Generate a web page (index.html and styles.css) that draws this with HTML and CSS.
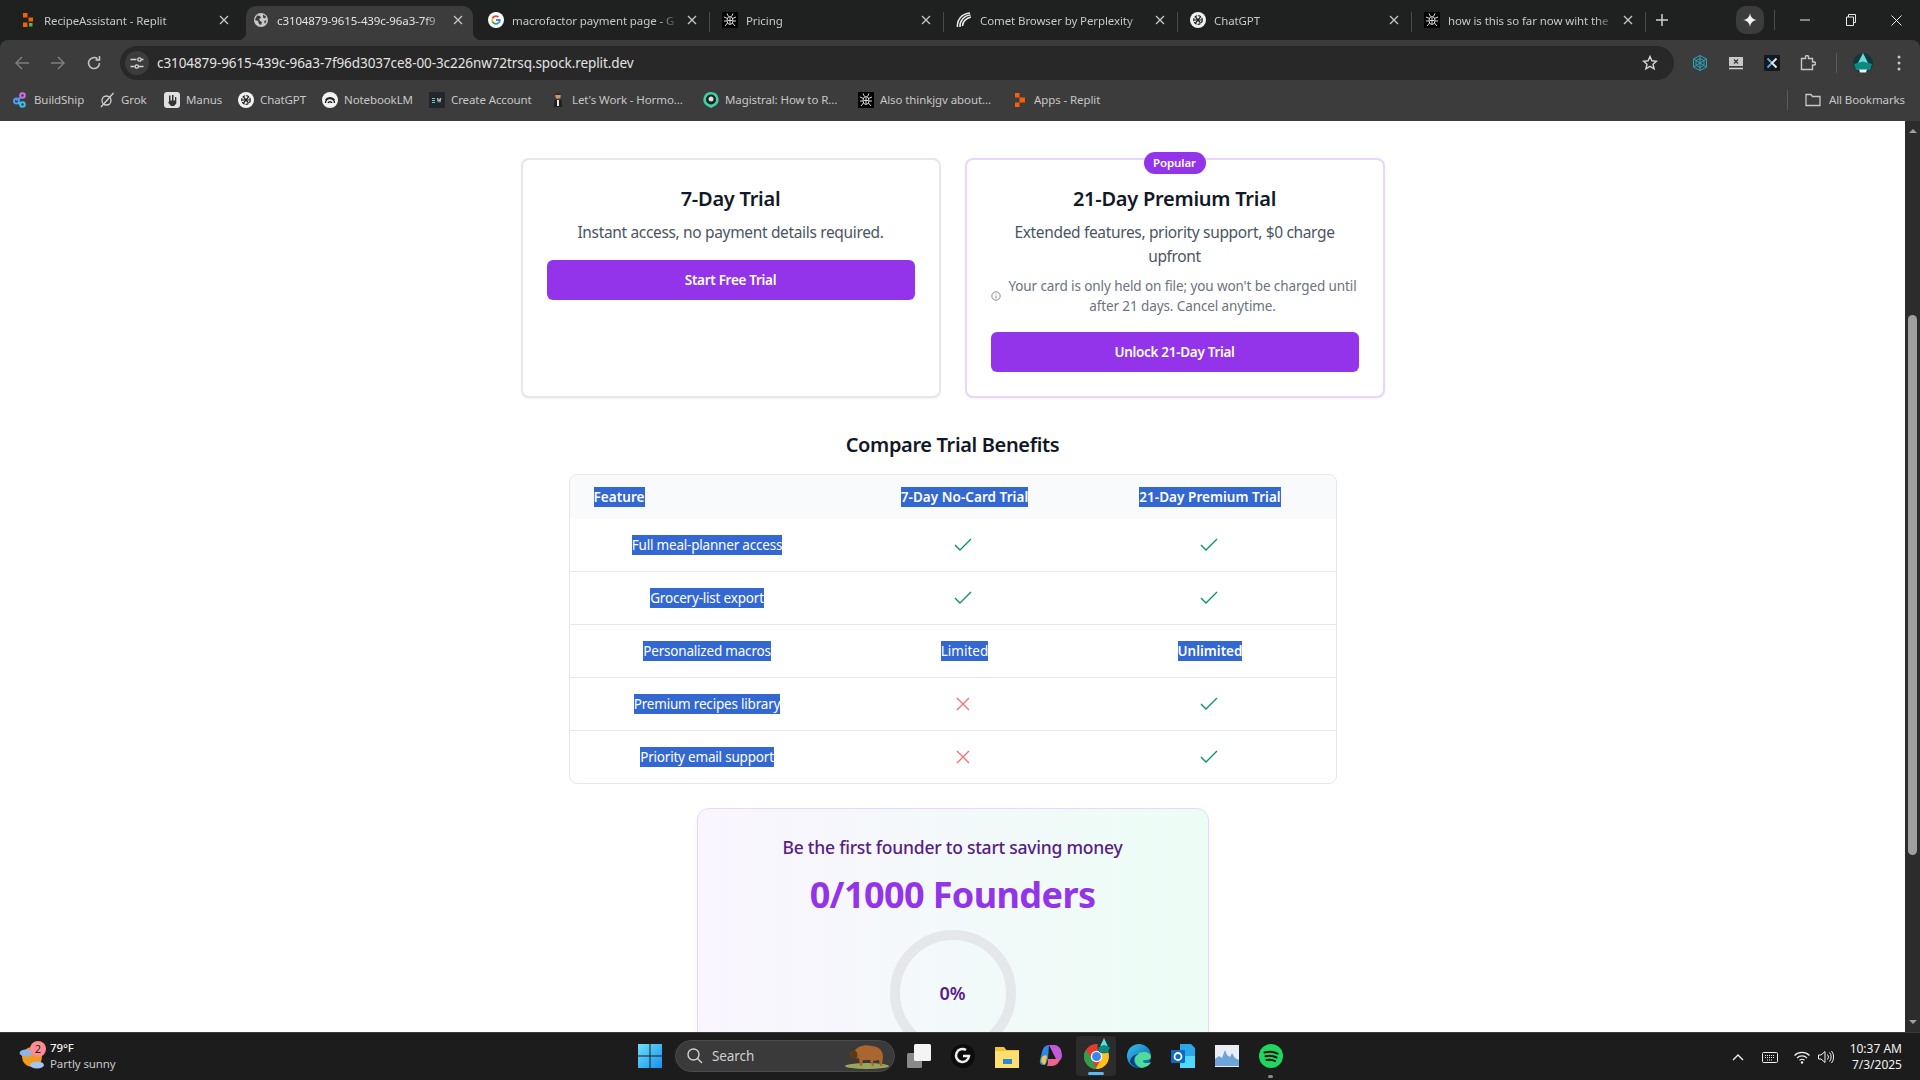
FILE: index.html
```html
<!DOCTYPE html>
<html lang="en">
<head>
<meta charset="utf-8">
<title>Trial</title>
<link rel="stylesheet" href="styles.css">
</head>
<body>
<svg class="defs" width="0" height="0" aria-hidden="true">
  <defs>
    <symbol id="replit" viewBox="0 0 16 16"><path fill="#f26207" d="M3 1h4.500v4.500H3zM7.500 5.500H13v5H7.500zM3 10.500h4.500V15H3z"/></symbol>
    <symbol id="replit-app" viewBox="0 0 16 16"><path fill="#f26207" d="M3 1h4.500v4.500H3zM8.500 5.500H13v4H8.500zM3 10.500h4.500V15H3z"/><path fill="#5fb04a" d="M9 11h3.500v3.500H9z"/></symbol>
    <symbol id="globe" viewBox="0 0 16 16"><circle cx="8" cy="8" r="7" fill="#c7c7c7"/><path fill="#3c3c3c" d="M4 3.500l3 .5 1 2-2 1 1 2 2 1-1 3-2-1-1-3-3-1zM10 2.500l3 2-1 2-2-1zM11 9l2.500-.5L12 12z"/></symbol>
    <symbol id="google" viewBox="0 0 16 16"><circle cx="8" cy="8" r="8" fill="#fff"/><path fill="#ea4335" d="M8 3.300c1.200 0 2.200.4 3 1.200L9.700 5.800C9.300 5.400 8.700 5.100 8 5.100c-1.300 0-2.400.9-2.800 2L3.700 6C4.500 4.400 6.100 3.300 8 3.300z"/><path fill="#fbbc05" d="M3.700 6l1.500 1.100a3 3 0 0 0 0 1.800L3.700 10a4.800 4.800 0 0 1 0-4z"/><path fill="#34a853" d="M3.700 10l1.500-1.100c.4 1.100 1.500 2 2.800 2 .7 0 1.300-.2 1.700-.5l1.400 1.100c-.8.800-1.900 1.200-3.100 1.200-1.900 0-3.500-1.100-4.300-2.700z"/><path fill="#4285f4" d="M12.700 8c0 1.400-.5 2.600-1.500 3.500L9.800 10.400c.5-.3.800-.8 1-1.400H8V7.100h4.600c.1.300.1.600.1.900z"/></symbol>
    <symbol id="spider" viewBox="0 0 16 16"><rect width="16" height="16" fill="#000"/><g fill="none" stroke="#d8d8d8" stroke-width="1"><ellipse cx="8" cy="8.500" rx="3" ry="4"/><path d="M5 1.500l1.500 3M11 1.500L9.500 4.500M2 5l3.500 1.500M14 5l-3.500 1.500M2 9h3M14 9h-3M3 14l2.500-3M13 14l-2.500-3M8 5v7M5.500 8.500h5"/></g></symbol>
    <symbol id="comet" viewBox="0 0 16 16"><g fill="none" stroke="#e8e8e8" stroke-width="1.500"><path d="M1.500 15C.5 8 6 1.500 14 1"/><path d="M4 15C3.500 9 8 3.500 14.500 3"/><path d="M6.500 14C6.500 10 10 6 15 5"/></g></symbol>
    <symbol id="gpt" viewBox="0 0 16 16"><circle cx="8" cy="8" r="8" fill="#f2f2f2"/><g fill="none" stroke="#222" stroke-width="1.200"><circle cx="8" cy="8" r="4.300" stroke-dasharray="3 1"/><path d="M5.500 5l5 6M10.500 5l-5 6M4 8h8"/></g></symbol>
    <symbol id="buildship" viewBox="0 0 16 16"><g fill="none" stroke-width="2"><circle cx="10.500" cy="3.500" r="2.300" stroke="#d070f0"/><path d="M9 5.500L4 8" stroke="#7a7cf0"/><circle cx="4.500" cy="9" r="2.500" stroke="#4a9cf0"/><path d="M6 11l3 1" stroke="#3ab8f0"/><circle cx="10.500" cy="12.500" r="2.300" stroke="#30c8e8"/></g></symbol>
    <symbol id="grok" viewBox="0 0 16 16"><g fill="none" stroke="#d0d0d0" stroke-width="1.300"><circle cx="7.500" cy="8.500" r="4.500"/><path d="M2 15L14.500 1"/></g></symbol>
    <symbol id="manus" viewBox="0 0 16 16"><rect width="16" height="16" rx="3" fill="#e0e0e0"/><path fill="#333" d="M5 3.500h1.500v5H8V3h1.500v5.500H11V5h1.300v6.500L10 14H7L4 10.500l1-.5z"/></symbol>
    <symbol id="notebook" viewBox="0 0 16 16"><circle cx="8" cy="8" r="8" fill="#f2f2f2"/><g fill="none" stroke="#222" stroke-width="1.400"><path d="M3.500 11a4.500 4.500 0 0 1 9 0"/><path d="M6 11a2.200 2.200 0 0 1 4 0"/><path d="M3.500 8a5 4 0 0 1 9 0"/></g></symbol>
    <symbol id="sw" viewBox="0 0 16 16"><rect width="16" height="16" fill="#23262c"/><path fill="#5fd3bd" d="M3 6h3v1H3zM3 8h3v1H3zM3 10h3v1H3z"/><path fill="#e0e0e0" d="M8 6l1 5 1-3 1 3 1.500-5h-1l-.5 2.500-1-2.500-1 2.500L8.900 6z"/></symbol>
    <symbol id="person" viewBox="0 0 16 16"><circle cx="8" cy="4" r="2.700" fill="#c89a74"/><path fill="#3a2c22" d="M5 3l1-2.500h4L11 3z"/><path fill="#1e1e1e" d="M4 15l.5-7h7l.5 7z"/><path fill="#e8e8e8" d="M7 8h2v6H7z"/></symbol>
    <symbol id="magistral" viewBox="0 0 16 16"><path fill="#3ecfa5" d="M8 0a7.500 7.500 0 0 1 3 14.400L8 16l-3-1.600A7.500 7.500 0 0 1 8 0z"/><circle cx="8" cy="7.500" r="5" fill="#15201d"/><circle cx="8" cy="7" r="2.500" fill="#e0e0e0"/></symbol>
    <symbol id="site" viewBox="0 0 16 16"><g fill="none" stroke="#d6d6d6" stroke-width="1.300"><path d="M1.500 4.500h6M1.500 11.500h4M12.500 4.500h2M9.500 11.500h5"/><circle cx="10.500" cy="4.500" r="1.700"/><circle cx="7.800" cy="11.500" r="1.700"/></g></symbol>
    <symbol id="close" viewBox="0 0 10 10"><path d="M1 1l8 8M9 1l-8 8" fill="none" stroke="#c7c7c7" stroke-width="1.300"/></symbol>
  </defs>
</svg>

<div class="app">
  <header class="tabstrip">
    <div class="tab"><svg class="fav"><use href="#replit-app"/></svg><span class="tab-title">RecipeAssistant - Replit</span><svg class="tab-x"><use href="#close"/></svg></div>
    <div class="tab active"><svg class="fav"><use href="#globe"/></svg><span class="tab-title">c3104879-9615-439c-96a3-7f9</span><svg class="tab-x"><use href="#close"/></svg></div>
    <div class="tab sep"><svg class="fav"><use href="#google"/></svg><span class="tab-title">macrofactor payment page - G</span><svg class="tab-x"><use href="#close"/></svg></div>
    <div class="tab sep"><svg class="fav"><use href="#spider"/></svg><span class="tab-title">Pricing</span><svg class="tab-x"><use href="#close"/></svg></div>
    <div class="tab sep"><svg class="fav"><use href="#comet"/></svg><span class="tab-title">Comet Browser by Perplexity</span><svg class="tab-x"><use href="#close"/></svg></div>
    <div class="tab sep"><svg class="fav"><use href="#gpt"/></svg><span class="tab-title">ChatGPT</span><svg class="tab-x"><use href="#close"/></svg></div>
    <div class="tab sep"><svg class="fav"><use href="#spider"/></svg><span class="tab-title">how is this so far now wiht the</span><svg class="tab-x"><use href="#close"/></svg></div>
    <svg class="newtab" viewBox="0 0 12 12"><path d="M6 0v12M0 6h12" stroke="#d0d0d0" stroke-width="1.500"/></svg>
    <div class="spark"><svg width="14" height="14" viewBox="0 0 14 14"><path fill="#f2f2f2" d="M7 0c.6 4 2.500 6.200 7 7-4.500.8-6.400 3-7 7-.6-4-2.500-6.200-7-7 4.500-.8 6.400-3 7-7z"/></svg></div>
    <div class="win-sep"></div>
    <div class="win-btns">
      <svg width="10" height="10" viewBox="0 0 10 10"><path d="M0 5h10" stroke="#e8e8e8"/></svg>
      <svg width="10" height="12" viewBox="0 0 10 12"><path d="M.5 3h7v8.500h-7zM2.500 3V.5h7v8H7.500" fill="none" stroke="#e8e8e8"/></svg>
      <svg width="11" height="11" viewBox="0 0 11 11"><path d="M.5.500l10 10M10.500.500l-10 10" stroke="#e8e8e8"/></svg>
    </div>
  </header>

  <div class="toolbar">
    <div class="nav">
      <svg viewBox="0 0 16 16"><path d="M15 8H2M8 2L2 8l6 6" fill="none" stroke="#7d7d7d" stroke-width="1.500"/></svg>
      <svg viewBox="0 0 16 16"><path d="M1 8h13M8 2l6 6-6 6" fill="none" stroke="#7d7d7d" stroke-width="1.500"/></svg>
      <svg viewBox="0 0 16 16"><path d="M13.500 8A5.500 5.500 0 1 1 11.500 3.800M13.500 1v4h-4" fill="none" stroke="#c7c7c7" stroke-width="1.500"/></svg>
    </div>
    <div class="omnibox">
      <div class="site-chip"><svg width="16" height="16"><use href="#site"/></svg></div>
      <span class="url">c3104879-9615-439c-96a3-7f96d3037ce8-00-3c226nw72trsq.spock.replit.dev</span>
      <svg class="star" viewBox="0 0 16 16"><path d="M8 1.500l1.900 4.300 4.600.4-3.500 3 1.100 4.600L8 11.300l-4.100 2.500L5 9.200l-3.500-3 4.600-.4z" fill="none" stroke="#d6d6d6" stroke-width="1.400"/></svg>
    </div>
    <div class="ext">
      <svg viewBox="0 0 16 16"><g fill="none" stroke="#2aa3bd" stroke-width="1"><path d="M8 .5L14.500 4v8L8 15.500 1.500 12V4z"/><path d="M8 3.500L12 5.700v4.600L8 12.500 4 10.300V5.700z"/><path d="M8 .5v15M1.500 4l13 8M14.500 4l-13 8"/></g></svg>
      <svg viewBox="0 0 16 16"><rect x="1" y="2" width="14" height="9" fill="#c7c7c7"/><path d="M6 4.500l4 4M10 4.500l-4 4" stroke="#333" stroke-width="1.200"/><path d="M1 13.500h14" stroke="#d6d6d6" stroke-width="1.500"/></svg>
      <svg viewBox="0 0 16 16"><rect width="16" height="16" rx="1" fill="#15181f"/><path d="M3.500 3.500L8 8l-4.500 4.500" fill="none" stroke="#5aa9f0" stroke-width="1.800"/><path d="M12.500 3.500L8 8l4.500 4.500" fill="none" stroke="#eee" stroke-width="1.800"/></svg>
      <svg viewBox="0 0 16 16"><path d="M1.500 3.500h4V2a1.500 1.500 0 0 1 3 0v1.500h4v3.500H14a1.500 1.500 0 0 1 0 3h-1.500v4.500h-11z" fill="none" stroke="#c7c7c7" stroke-width="1.400"/></svg>
      <div class="ext-sep"></div>
      <svg class="avatar" viewBox="0 0 20 20"><circle cx="10" cy="10" r="10" fill="#13373a"/><path fill="#67dcd8" d="M10 0l5.500 11L10 9l-5.500 2z"/><path fill="#0c8a82" d="M1 11l9-2.500 9 2.500-2 6H3z"/><path fill="#f2f2f2" d="M6 16.500h8l-1 3H7z"/></svg>
      <svg class="menu" viewBox="0 0 4 16"><circle cx="2" cy="2" r="1.500" fill="#c7c7c7"/><circle cx="2" cy="8" r="1.500" fill="#c7c7c7"/><circle cx="2" cy="14" r="1.500" fill="#c7c7c7"/></svg>
    </div>
  </div>

  <nav class="bookmarks">
    <a class="bm b1"><svg><use href="#buildship"/></svg>BuildShip</a>
    <a class="bm b2"><svg><use href="#grok"/></svg>Grok</a>
    <a class="bm b3"><svg><use href="#manus"/></svg>Manus</a>
    <a class="bm b4"><svg><use href="#gpt"/></svg>ChatGPT</a>
    <a class="bm b5"><svg><use href="#notebook"/></svg>NotebookLM</a>
    <a class="bm b6"><svg><use href="#sw"/></svg>Create Account</a>
    <a class="bm b7"><svg><use href="#person"/></svg>Let's Work - Hormo...</a>
    <a class="bm b8"><svg><use href="#magistral"/></svg>Magistral: How to R...</a>
    <a class="bm b9"><svg><use href="#spider"/></svg>Also thinkjgv about...</a>
    <a class="bm b10"><svg><use href="#replit"/></svg>Apps - Replit</a>
    <div class="bm-all">
      <div class="bm-sep"></div>
      <svg viewBox="0 0 16 14"><path d="M1 12.500V1.500h5l1.500 2h7.500v9z" fill="none" stroke="#c7c7c7" stroke-width="1.300"/></svg>
      <span>All Bookmarks</span>
    </div>
  </nav>

  <div class="viewport">
    <main class="page">
      <section class="cards">
        <article class="card">
          <h3 class="card-title">7-Day Trial</h3>
          <p class="card-desc">Instant access, no payment details required.</p>
          <button class="cta">Start Free Trial</button>
        </article>
        <article class="card premium">
          <span class="badge">Popular</span>
          <h3 class="card-title">21-Day Premium Trial</h3>
          <p class="card-desc">Extended features, priority support, $0 charge upfront</p>
          <div class="note">
            <svg viewBox="0 0 12 12"><circle cx="6" cy="6" r="5" fill="none" stroke="#6b7280"/><path d="M6 5.500V9M6 3v1.200" stroke="#6b7280"/></svg>
            <p>Your card is only held on file; you won't be charged until after 21 days. Cancel anytime.</p>
          </div>
          <button class="cta">Unlock 21-Day Trial</button>
        </article>
      </section>

      <h2 class="compare-title">Compare Trial Benefits</h2>
      <div class="table-wrap">
        <table class="compare">
          <colgroup><col class="c1"><col class="c2"><col class="c3"></colgroup>
          <thead>
            <tr><th class="left"><span class="sel">Feature</span></th><th><span class="sel">7-Day No-Card Trial</span></th><th><span class="sel">21-Day Premium Trial</span></th></tr>
          </thead>
          <tbody>
            <tr><td><span class="sel">Full meal-planner access</span></td><td><svg class="mark yes" viewBox="0 0 24 24"><path d="M20 6L9 17l-5-5"/></svg></td><td><svg class="mark yes" viewBox="0 0 24 24"><path d="M20 6L9 17l-5-5"/></svg></td></tr>
            <tr><td><span class="sel">Grocery-list export</span></td><td><svg class="mark yes" viewBox="0 0 24 24"><path d="M20 6L9 17l-5-5"/></svg></td><td><svg class="mark yes" viewBox="0 0 24 24"><path d="M20 6L9 17l-5-5"/></svg></td></tr>
            <tr><td><span class="sel">Personalized macros</span></td><td><span class="sel val">Limited</span></td><td><span class="sel val strong">Unlimited</span></td></tr>
            <tr><td><span class="sel">Premium recipes library</span></td><td><svg class="mark no" viewBox="0 0 24 24"><path d="M18 6L6 18M6 6l12 12"/></svg></td><td><svg class="mark yes" viewBox="0 0 24 24"><path d="M20 6L9 17l-5-5"/></svg></td></tr>
            <tr><td><span class="sel">Priority email support</span></td><td><svg class="mark no" viewBox="0 0 24 24"><path d="M18 6L6 18M6 6l12 12"/></svg></td><td><svg class="mark yes" viewBox="0 0 24 24"><path d="M20 6L9 17l-5-5"/></svg></td></tr>
          </tbody>
        </table>
      </div>

      <section class="founders">
        <p class="founders-lead">Be the first founder to start saving money</p>
        <p class="founders-count">0/1000 Founders</p>
        <div class="ring">0%</div>
      </section>
    </main>
    <aside class="scrollbar">
      <i class="arrow up"></i>
      <div class="track"><div class="thumb"></div></div>
      <i class="arrow down"></i>
    </aside>
  </div>

  <footer class="taskbar">
    <div class="weather">
      <div class="weather-icon">
        <svg width="26" height="28" viewBox="0 0 26 28"><circle cx="13" cy="15" r="10" fill="#f09a1e"/><ellipse cx="7" cy="11" rx="6.500" ry="3.500" fill="#8fb3e8"/><ellipse cx="18" cy="23" rx="7" ry="3.500" fill="#a7c4f0"/></svg>
        <span class="weather-badge">2</span>
      </div>
      <div class="weather-text"><span class="temp">79°F</span><span class="cond">Partly sunny</span></div>
    </div>
    <div class="task-center">
      <svg class="ti win" viewBox="0 0 24 24"><defs><linearGradient id="wg" x1="0" y1="0" x2="1" y2="1"><stop offset="0" stop-color="#6fe0f8"/><stop offset="1" stop-color="#1590f0"/></linearGradient></defs><path fill="url(#wg)" d="M0 0h11.500v11.500H0zM12.500 0H24v11.500H12.500zM0 12.500h11.500V24H0zM12.500 12.500H24V24H12.500z"/></svg>
      <div class="search">
        <svg width="16" height="16" viewBox="0 0 16 16"><circle cx="6.500" cy="6.500" r="5.500" fill="none" stroke="#d0d0d0" stroke-width="1.400"/><path d="M10.500 10.500L15 15" stroke="#d0d0d0" stroke-width="1.400"/></svg>
        <span>Search</span>
        <svg class="bison" width="46" height="26" viewBox="0 0 46 26"><ellipse cx="23" cy="23" rx="22" ry="3" fill="#9aa65a"/><path fill="#a9662e" d="M10 9c3-6 10-8 18-6 8 1 11 5 11 11l-1 9h-2l-1-6-6 1 1 5h-2l-2-6-7 0-1 6h-2l-1-8c-3 1-5 0-7-3z"/><path fill="#5c3a1c" d="M5 11c1-3 4-5 7-3 2 2 2 6 0 8-3 1-6-1-7-5z"/></svg>
      </div>
      <svg class="ti" viewBox="0 0 24 24"><rect x="0" y="9" width="15" height="15" rx="1.500" fill="#8a8a8a"/><rect x="7" y="0" width="17" height="17" rx="1.500" fill="#f4f4f4"/></svg>
      <svg class="ti" viewBox="0 0 24 24"><circle cx="12" cy="12" r="12" fill="#0c0c0c"/><path d="M15 6a6.500 6.500 0 1 0 3 6h-6" fill="none" stroke="#eee" stroke-width="2.500"/></svg>
      <svg class="ti" viewBox="0 0 24 24"><path fill="#f2c230" d="M0 3h9l2.500 3H24v18H0z"/><path fill="#ffdf70" d="M0 7h24v17H0z"/><rect x="8" y="15" width="9" height="5" fill="#2a8ad4"/></svg>
      <svg class="ti" viewBox="0 0 24 24"><path fill="#2f86e8" d="M10 1c-4 0-6 3-7 7L1 16c-.8 3 1 5 3 5 3 0 4-3 5-6z"/><path fill="#f0c83c" d="M3 19c-2-3 0-6 1-7l3-1 1 2-2 8z"/><path fill="#c35ad8" d="M10 1h5c3 0 6 2 7 5l1 5c0 4-2 6-5 6z"/><path fill="#f0648c" d="M9 15h9c2 0 3 0 3 0-1 4-4 7-8 7H8c1-2 1-5 1-7z"/></svg>
      <div class="active-app">
        <svg width="25" height="25" viewBox="0 0 24 24"><circle cx="12" cy="12" r="12" fill="#e33b2e"/><path fill="#f9c21c" d="M12 7h10.800A12 12 0 0 1 11 24l5.500-9.500z"/><path fill="#2ca14a" d="M2 5.500L7.500 15 12 24A12 12 0 0 1 2 5.500z"/><circle cx="12" cy="12" r="5.500" fill="#fff"/><circle cx="12" cy="12" r="4.300" fill="#3a86f0"/></svg>
        <svg class="chrome-avatar" width="14" height="16" viewBox="0 0 20 24"><ellipse cx="10" cy="13" rx="10" ry="10" fill="#13373a"/><path fill="#67dcd8" d="M10 0l6 13-6-2-6 2z"/><path fill="#0c8a82" d="M1 14l9-3 9 3-3 8H4z"/></svg>
        <i class="run-bar"></i>
      </div>
      <svg class="ti" viewBox="0 0 24 24"><defs><linearGradient id="eg" x1="0" y1="0" x2="1" y2="1"><stop offset="0" stop-color="#35c1f1"/><stop offset="1" stop-color="#0c59a4"/></linearGradient></defs><circle cx="12" cy="12" r="12" fill="url(#eg)"/><path fill="#4fdc9a" d="M24 13c0-3-3-5-7-5-5 0-9 3-9 8 0 4 3 7 7 8 5-1 8-3 9-6-2 1-8 2-8-1 0-1 1-1 3-1 3 0 5-1 5-3z"/><path fill="#0b3f76" d="M12 10c-5 0-9 4-9 8 2 3 6 6 11 6-4-1-7-4-7-8 0-3 2-5 5-6z"/></svg>
      <svg class="ti" viewBox="0 0 24 24"><path fill="#28a8ea" d="M9 0h11l4 4v16H9z"/><path fill="#50d9ff" d="M9 12h15v12H9z"/><rect x="0" y="6" width="14" height="13" rx="1" fill="#0f6cbd"/><circle cx="7" cy="12.500" r="3.500" fill="none" stroke="#fff" stroke-width="1.800"/></svg>
      <svg class="ti" viewBox="0 0 24 24"><rect width="24" height="22" y="1" fill="#e8eef4"/><path fill="#6ea4d8" d="M0 22V15l4-3 3 2 3-8 2 5 3 2 2-4 3 5 4 2v6z"/></svg>
      <div class="app-run">
        <svg class="ti" viewBox="0 0 24 24"><circle cx="12" cy="12" r="12" fill="#1ed760"/><g fill="none" stroke="#111" stroke-width="2" stroke-linecap="round"><path d="M5.500 8.500c4-1 9-1 13 1.200"/><path d="M6.500 12.300c3.500-.8 7.500-.6 11 1.200"/><path d="M7.500 16c3-.6 6-.4 8.500 1"/></g></svg>
        <i class="run-dot"></i>
      </div>
    </div>
    <div class="tray">
      <svg width="12" height="7" viewBox="0 0 12 7"><path d="M1 6l5-5 5 5" fill="none" stroke="#f2f2f2" stroke-width="1.300"/></svg>
      <svg class="kbd" width="16" height="11" viewBox="0 0 16 11"><rect x=".5" y=".5" width="15" height="10" rx="1" fill="none" stroke="#eee"/><path d="M3 3.500h10M3 5.500h10M5 8h6" stroke="#eee" stroke-dasharray="1 1"/></svg>
      <svg class="wifi" width="16" height="13" viewBox="0 0 16 13"><g fill="none" stroke="#f2f2f2" stroke-width="1.100"><path d="M.5 4.500a10.500 10.500 0 0 1 15 0"/><path d="M3 7a7 7 0 0 1 10 0"/><path d="M5.500 9.300a3.500 3.500 0 0 1 5 0"/></g><circle cx="8" cy="11.500" r="1.200" fill="#f2f2f2"/></svg>
      <svg class="vol" width="16" height="14" viewBox="0 0 16 14"><g fill="none" stroke="#f2f2f2" stroke-width="1"><path d="M.5 5v4h2.500L7 12.500v-11L3 5z"/><path d="M9.500 4.500a4 4 0 0 1 0 5M11.500 2.500a7 7 0 0 1 0 9M13.500 1a9.500 9.500 0 0 1 0 12"/></g></svg>
      <div class="clock"><span>10:37 AM</span><span>7/3/2025</span></div>
    </div>
  </footer>
</div>
</body>
</html>
```

FILE: styles.css
```css
* { box-sizing: border-box; }
html, body { margin: 0; height: 100%; overflow: hidden; }
body { font-family: "Noto Sans", "Open Sans", sans-serif; color: #111827; background: #fff; }
.defs { position: absolute; }
svg { flex: none; }
i { display: block; }

.app { display: flex; flex-direction: column; height: 1080px; background: #1f2020; }

/* tab strip */
.tabstrip { height: 40px; flex: none; display: flex; align-items: flex-end; padding-left: 8px; background: #1f2020; }
.tab { position: relative; width: 234px; height: 34px; flex: none; display: flex; align-items: center; padding: 0 10px 6px 12px; font-size: 11.5px; letter-spacing: -.1px; color: #c7c7c7; }
.tab.sep::after { content: ""; position: absolute; right: 0; top: 6px; width: 1px; height: 20px; background: #4a4a4a; }
.tab.active { color: #e3e3e3; background: #3c3c3c; margin: 0 3px 0 4px; width: 227px; padding-left: 7px; padding-right: 7px; border-radius: 10px 10px 0 0; }
.tab.active::before, .tab.active::after { content: ""; position: absolute; bottom: 0; width: 8px; height: 8px; }
.tab.active::before { left: -8px; background: radial-gradient(circle at 0 0, transparent 8px, #3c3c3c 8.5px); }
.tab.active::after { right: -8px; background: radial-gradient(circle at 100% 0, transparent 8px, #3c3c3c 8.5px); }
.fav { width: 16px; height: 16px; margin-right: 8px; }
.tab-title { flex: 1; min-width: 0; white-space: nowrap; overflow: hidden; -webkit-mask-image: linear-gradient(to left, transparent 8px, #000 28px); mask-image: linear-gradient(to left, transparent 8px, #000 28px); }
.tab-x { width: 10px; height: 10px; margin-right: 3px; }
.newtab { width: 12px; height: 12px; margin: 0 0 14px 10px; }
.spark { width: 28px; height: 28px; margin: 0 0 6px 68px; border-radius: 10px; background: #3c3c3c; display: flex; align-items: center; justify-content: center; }
.win-sep { width: 1px; height: 20px; background: #4a4a4a; margin: 0 0 10px 10px; }
.win-btns { flex: 1; display: flex; justify-content: space-between; align-items: center; height: 40px; padding: 0 18px 0 25px; }

/* toolbar */
.toolbar { height: 40px; flex: none; background: #3c3c3c; border-radius: 8px 8px 0 0; display: flex; align-items: flex-start; padding: 6px 0 0 0; }
.nav { width: 120px; height: 34px; display: flex; align-items: center; padding-left: 14px; gap: 20px; }
.nav svg { width: 16px; height: 16px; }
.omnibox { width: 1554px; height: 34px; flex: none; display: flex; align-items: center; background: #282828; border-radius: 17px; padding-left: 5px; }
.site-chip { width: 24px; height: 24px; border-radius: 50%; background: #3c3c3c; display: flex; align-items: center; justify-content: center; margin-right: 8px; }
.url { font-size: 13.5px; color: #e3e3e3; letter-spacing: -.08px; white-space: nowrap; flex: 1; padding-bottom: 1px; }
.star { width: 16px; height: 16px; margin-right: 16px; }
.ext { flex: 1; height: 34px; display: flex; align-items: center; padding-left: 18px; }
.ext > svg { width: 16px; height: 16px; margin-right: 20px; }
.ext .avatar { width: 20px; height: 20px; margin-right: 0; }
.ext .menu { width: 4px; height: 16px; margin: 0 0 0 24px; }
.ext-sep { width: 1px; height: 20px; background: #5a5a5a; margin-right: 16px; }

/* bookmarks */
.bookmarks { height: 41px; flex: none; background: #3c3c3c; display: flex; align-items: center; padding-bottom: 2px; padding-left: 12px; font-size: 11.5px; letter-spacing: -.1px; color: #c7c7c7; white-space: nowrap; }
.bm { display: flex; align-items: center; flex: none; overflow: hidden; }
.bm svg { width: 16px; height: 16px; margin-right: 6px; }
.b1 { width: 87px; } .b2 { width: 65px; } .b3 { width: 74px; } .b4 { width: 84px; } .b5 { width: 107px; }
.b6 { width: 121px; } .b7 { width: 153px; } .b8 { width: 155px; } .b9 { width: 154px; } .b10 { width: 100px; }
.bm-all { margin-left: auto; display: flex; align-items: center; padding-right: 15px; }
.bm-sep { width: 1px; height: 20px; background: #5a5a5a; margin-right: 17px; }
.bm-all svg { width: 16px; height: 14px; margin-right: 8px; }

/* page */
.viewport { flex: 1; min-height: 0; display: flex; overflow: hidden; background: #fff; }
.page { flex: 1; min-width: 0; padding-top: 37px; }
.cards { width: 864px; margin: 0 auto; display: grid; grid-template-columns: 1fr 1fr; gap: 24px; }
.card { position: relative; border: 2px solid #e5e7eb; border-radius: 8px; padding: 24px; text-align: center; background: #fff; box-shadow: 0 1px 2px rgba(0,0,0,.05); }
.card.premium { border-color: #e9d5ff; }
.card-title { margin: 1px 0 7px; font-size: 20px; line-height: 28px; font-weight: 600; letter-spacing: -.25px; color: #111827; }
.card-desc { margin: 0 0 16px; font-size: 15.5px; line-height: 24px; letter-spacing: -.34px; color: #4b5563; }
.premium .card-desc { margin-bottom: 8px; }
.badge { position: absolute; top: -8px; left: 50%; transform: translateX(-50%); width: 62px; height: 22px; border-radius: 11px; background: #9333ea; color: #fff; font-size: 11.5px; line-height: 22px; font-weight: 600; letter-spacing: -.1px; }
.note { display: flex; align-items: center; gap: 6px; margin-bottom: 16px; }
.note svg { width: 10px; height: 10px; }
.note p { margin: 0; font-size: 13.5px; line-height: 20px; letter-spacing: -.1px; color: #6b7280; }
.cta { display: block; width: 100%; height: 40px; border: 0; border-radius: 6px; background: #9333ea; color: #fff; font: 600 13.5px/20px "Noto Sans", sans-serif; letter-spacing: -.3px; }

.compare-title { margin: 33px 0 15px; text-align: center; font-size: 20px; line-height: 28px; font-weight: 600; letter-spacing: -.35px; color: #111827; }
.table-wrap { width: 768px; margin: 0 auto; border: 1px solid #e5e7eb; border-radius: 8px; overflow: hidden; }
.compare { width: 100%; border-collapse: separate; border-spacing: 0; table-layout: fixed; font-size: 13.5px; line-height: 20px; letter-spacing: -.2px; }
.c1 { width: 275px; } .c2 { width: 240px; } .c3 { width: 251px; }
.compare th { height: 44px; padding: 0 24px; background: #f9fafb; font-weight: 600; letter-spacing: .05px; text-align: center; }
.compare th.left { text-align: left; }
.compare td { height: 53px; padding: 0 24px; text-align: center; border-bottom: 1px solid #e5e7eb; }
.compare tr:last-child td { height: 52px; border-bottom: 0; }
.sel { display: inline-block; background: #3367d1; color: #fff; line-height: 20px; vertical-align: top; }
.sel.val { letter-spacing: 0; }
.sel.strong { font-weight: 600; }
.mark { display: inline-block; width: 24px; height: 24px; vertical-align: top; fill: none; stroke-width: 1.4; margin-right: 3px; }
.mark.yes { stroke: #059669; }
.mark.no { stroke: #f87171; }

.founders { width: 512px; margin: 24px auto 0; padding-top: 24px; height: 300px; border: 1px solid #e9d5ff; border-radius: 12px; background: linear-gradient(to right, #faf5ff, #ecfdf5); box-shadow: 0 4px 6px -1px rgba(0,0,0,.06); text-align: center; }
.founders-lead { margin: 0; font-size: 17.5px; line-height: 28px; font-weight: 500; letter-spacing: -.24px; color: #581c87; }
.founders-count { margin: 14px 0 15px; font-size: 36px; line-height: 40px; font-weight: 700; letter-spacing: -.6px; color: #9333ea; }
.ring { width: 126px; height: 126px; margin: 0 auto; border: 10px solid #e5e7eb; border-radius: 50%; display: flex; align-items: center; justify-content: center; font-size: 18px; font-weight: 600; color: #581c87; }

.scrollbar { width: 15px; flex: none; background: #2c2c2c; display: flex; flex-direction: column; align-items: center; padding: 8px 0; }
.track { flex: 1; width: 9px; padding-top: 182px; }
.thumb { width: 9px; height: 540px; border-radius: 4.5px; background: #9f9f9f; }
.arrow { width: 0; height: 0; border-left: 4px solid transparent; border-right: 4px solid transparent; }
.arrow.up { border-bottom: 4px solid #9f9f9f; }
.arrow.down { border-top: 4px solid #9f9f9f; }

/* taskbar */
.taskbar { position: relative; height: 48px; flex: none; background: #1c1c1c; border-top: 1px solid #3a3a3a; padding-bottom: 1px; display: flex; align-items: center; }
.weather { width: 620px; flex: none; display: flex; align-items: center; padding-left: 19px; }
.weather-icon { position: relative; width: 26px; height: 28px; margin-right: 5px; }
.weather-badge { position: absolute; left: 11px; top: -1px; width: 16px; height: 16px; border-radius: 50%; background: #ff8b94; color: #222; font-size: 11px; line-height: 16px; text-align: center; }
.weather-text { display: flex; flex-direction: column; font-size: 11.5px; line-height: 16px; letter-spacing: -.1px; }
.temp { color: #f2f2f2; font-weight: 500; }
.cond { color: #c8c8c8; }
.task-center { display: flex; align-items: center; height: 46px; padding-left: 18px; }
.ti { width: 24px; height: 24px; margin-right: 20px; }
.win { margin-right: 13px; }
.search { width: 220px; height: 32px; margin-right: 12px; border-radius: 16px; background: #3a3a3a; border: 1px solid #4a4a4a; display: flex; align-items: center; padding-left: 11px; font-size: 13.5px; letter-spacing: -.1px; color: #d0d0d0; }
.search span { margin-left: 9px; flex: 1; }
.bison { margin-right: 4px; }
.active-app { position: relative; width: 40px; height: 40px; margin: 0 11px 0 -7px; border-radius: 4px; background: #2c2c2c; display: flex; align-items: center; justify-content: center; }
.chrome-avatar { position: absolute; right: 5px; top: 2px; }
.run-bar { position: absolute; left: 12px; bottom: 1px; width: 16px; height: 3px; border-radius: 2px; background: #5cb8f0; }
.app-run { position: relative; height: 46px; display: flex; align-items: center; }
.app-run .ti { margin-right: 0; }
.run-dot { position: absolute; left: 9px; bottom: 1px; width: 5px; height: 3px; border-radius: 2px; background: #8a8a8a; }
.tray { margin-left: auto; display: flex; align-items: center; padding: 2px 18px 0 0; }
.tray .kbd { margin-left: 18px; }
.tray .wifi { margin-left: 16px; }
.tray .vol { margin-left: 8px; }
.clock { margin-left: 16px; display: flex; flex-direction: column; align-items: flex-end; font-size: 12px; line-height: 16px; color: #f2f2f2; }
```
